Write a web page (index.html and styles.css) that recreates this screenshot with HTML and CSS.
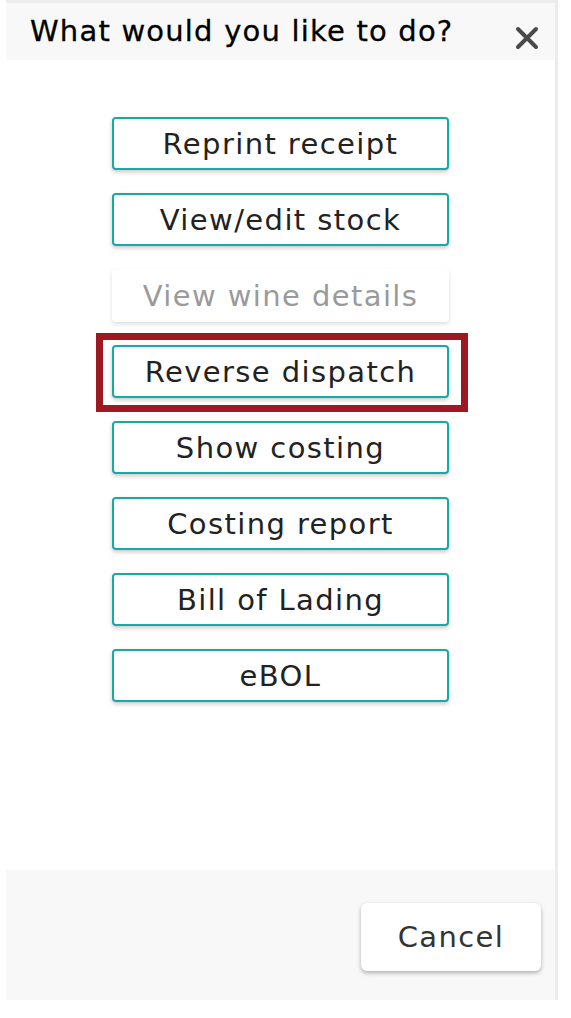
FILE: index.html
```html
<!DOCTYPE html>
<html>
<head>
<meta charset="utf-8">
<link rel="stylesheet" href="styles.css">
</head>
<body>
<div class="dialog">
  <div class="header">
    <h1 class="title">What would you like to do?</h1>
    <button class="close" aria-label="Close">
      <svg width="24" height="24" viewBox="0 0 24 24"><path d="M3 3 L21 21 M21 3 L3 21" stroke="#4a4a4a" stroke-width="4" stroke-linecap="round"/></svg>
    </button>
  </div>
  <div class="body">
    <button class="action">Reprint receipt</button>
    <button class="action">View/edit stock</button>
    <button class="action disabled">View wine details</button>
    <div class="highlight-wrap">
      <button class="action">Reverse dispatch</button>
      <span class="highlight"></span>
    </div>
    <button class="action">Show costing</button>
    <button class="action">Costing report</button>
    <button class="action">Bill of Lading</button>
    <button class="action">eBOL</button>
  </div>
  <div class="footer">
    <button class="cancel">Cancel</button>
  </div>
</div>
</body>
</html>
```
FILE: styles.css
```css
* { box-sizing: border-box; }
html, body { margin: 0; padding: 0; background: #fff; }
body {
  font-family: "DejaVu Sans", "Open Sans", sans-serif;
  width: 571px;
  height: 1018px;
  overflow: hidden;
}
.dialog {
  margin-left: 6px;
  width: 552px;
  height: 1000px;
  border-top: 3px solid #ececec;
  border-right: 3px solid #ececec;
  display: flex;
  flex-direction: column;
  background: #fff;
}
.header {
  height: 57px;
  background: #f8f8f8;
  display: flex;
  align-items: center;
  justify-content: space-between;
  padding: 0 16px 0 24px;
}
.title {
  margin: 0;
  font-size: 29px;
  font-weight: normal;
  color: #000;
  letter-spacing: 1.2px;
  -webkit-text-stroke: 0.3px #000;
  position: relative;
  top: -1px;
}
.close {
  border: 0;
  background: transparent;
  padding: 0;
  width: 24px;
  height: 24px;
  margin-top: 12px;
  display: flex;
}
.body {
  flex: 1;
  display: flex;
  flex-direction: column;
  align-items: center;
  gap: 23px;
  padding-top: 57px;
}
.action {
  width: 337px;
  height: 53px;
  border: 2px solid #16aaa5;
  border-radius: 4px;
  background: #fff;
  color: #222;
  font-family: inherit;
  font-size: 29px;
  letter-spacing: 1.4px;
  box-shadow: 0 2px 4px rgba(0,0,0,0.22);
  padding: 0;
}
.action.disabled {
  border-color: transparent;
  color: #9a9a9a;
  box-shadow: 0 2px 4px rgba(0,0,0,0.14);
}
.highlight-wrap {
  position: relative;
  display: flex;
}
.highlight {
  position: absolute;
  left: -16px;
  right: -19px;
  top: -12px;
  bottom: -14px;
  border: 7px solid #9d1921;
  pointer-events: none;
}
.footer {
  height: 130px;
  background: #f8f8f8;
  display: flex;
  justify-content: flex-end;
  align-items: flex-start;
  padding: 33px 14px 0 0;
}
.cancel {
  width: 180px;
  height: 68px;
  border: 0;
  border-radius: 6px;
  background: #fff;
  color: #333;
  font-family: inherit;
  font-size: 29px;
  letter-spacing: 1.4px;
  box-shadow: 0 2px 4px rgba(0,0,0,0.3);
}
```
